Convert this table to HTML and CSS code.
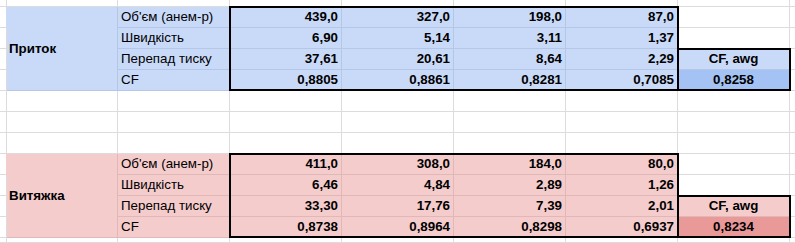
FILE: index.html
```html
<!DOCTYPE html>
<html lang="uk">
<head>
<meta charset="utf-8">
<title>Приток / Витяжка</title>
<link rel="stylesheet" href="styles.css">
</head>
<body>
<div class="sheet">
  <!-- row 0 -->
  <div></div><div></div><div></div><div></div><div></div><div></div><div></div><div></div><div></div>

  <!-- Приток -->
  <div></div>
  <div class="b merged">Приток</div>
  <div class="b">Об'єм (анем-р)</div>
  <div class="b n tt ll">439,0</div>
  <div class="b n tt">327,0</div>
  <div class="b n tt">198,0</div>
  <div class="b n tt rr">87,0</div>
  <div></div><div></div>

  <div></div>
  <div class="b">Швидкість</div>
  <div class="b n ll">6,90</div>
  <div class="b n">5,14</div>
  <div class="b n">3,11</div>
  <div class="b n rr">1,37</div>
  <div></div><div></div>

  <div></div>
  <div class="b">Перепад тиску</div>
  <div class="b n ll">37,61</div>
  <div class="b n">20,61</div>
  <div class="b n">8,64</div>
  <div class="b n rr">2,29</div>
  <div class="b c tt rr">CF, awg</div>
  <div></div>

  <div></div>
  <div class="b">CF</div>
  <div class="b n bb ll">0,8805</div>
  <div class="b n bb">0,8861</div>
  <div class="b n bb">0,8281</div>
  <div class="b n bb rr">0,7085</div>
  <div class="db c bb rr">0,8258</div>
  <div></div>

  <!-- empty rows -->
  <div></div><div></div><div></div><div></div><div></div><div></div><div></div><div></div><div></div>
  <div></div><div></div><div></div><div></div><div></div><div></div><div></div><div></div><div></div>
  <div></div><div></div><div></div><div></div><div></div><div></div><div></div><div></div><div></div>

  <!-- Витяжка -->
  <div></div>
  <div class="p merged">Витяжка</div>
  <div class="p">Об'єм (анем-р)</div>
  <div class="p n tt ll">411,0</div>
  <div class="p n tt">308,0</div>
  <div class="p n tt">184,0</div>
  <div class="p n tt rr">80,0</div>
  <div></div><div></div>

  <div></div>
  <div class="p">Швидкість</div>
  <div class="p n ll">6,46</div>
  <div class="p n">4,84</div>
  <div class="p n">2,89</div>
  <div class="p n rr">1,26</div>
  <div></div><div></div>

  <div></div>
  <div class="p">Перепад тиску</div>
  <div class="p n ll">33,30</div>
  <div class="p n">17,76</div>
  <div class="p n">7,39</div>
  <div class="p n rr">2,01</div>
  <div class="p c tt rr">CF, awg</div>
  <div></div>

  <div></div>
  <div class="p">CF</div>
  <div class="p n bb ll">0,8738</div>
  <div class="p n bb">0,8964</div>
  <div class="p n bb">0,8298</div>
  <div class="p n bb rr">0,6937</div>
  <div class="dp c bb rr">0,8234</div>
  <div></div>

  <!-- last row -->
  <div></div><div></div><div></div><div></div><div></div><div></div><div></div><div></div><div></div>
</div>
</body>
</html>
```

FILE: styles.css
```css
html, body {
  margin: 0;
  padding: 0;
  background: #ffffff;
}

body {
  font-family: "Liberation Sans", Arial, sans-serif;
  font-size: 13.33px;
  color: #000000;
}

.sheet {
  display: grid;
  grid-template-columns: 6px repeat(7, 112px) 1fr;
  grid-template-rows: 7px repeat(11, 21px) 1fr;
  width: 795px;
  height: 243px;
  overflow: hidden;
}

.sheet > div {
  position: relative;
  box-sizing: border-box;
  border-right: 1px solid #dcdcdc;
  border-bottom: 1px solid #dcdcdc;
  padding: 0 3px;
  line-height: 20px;
  white-space: nowrap;
}

.sheet > .b {
  background: #c9daf8;
  border-color: #b5c7e6;
}

.sheet > .p {
  background: #f4cccc;
  border-color: #e0b8b8;
}

.sheet > .db {
  background: #a4c2f4;
  border-color: #b5c7e6;
}

.sheet > .dp {
  background: #ea9999;
  border-color: #e0b8b8;
}

.sheet > .merged {
  grid-row: span 4;
  display: flex;
  align-items: center;
  font-weight: bold;
}

.n {
  text-align: right;
  font-weight: bold;
  padding-right: 4px;
}

.c {
  text-align: center;
  font-weight: bold;
}

/* thick black box edges */
.tt::before,
.bb::before {
  content: "";
  position: absolute;
  left: -1px;
  right: -1px;
  height: 2px;
  background: #000;
  z-index: 1;
}
.tt::before { top: -1px; }
.bb::before { bottom: -1px; }

.ll::after,
.rr::after {
  content: "";
  position: absolute;
  top: -1px;
  bottom: -1px;
  width: 2px;
  background: #000;
  z-index: 1;
}
.ll::after { left: -1px; }
.rr::after { right: -2px; }
```
